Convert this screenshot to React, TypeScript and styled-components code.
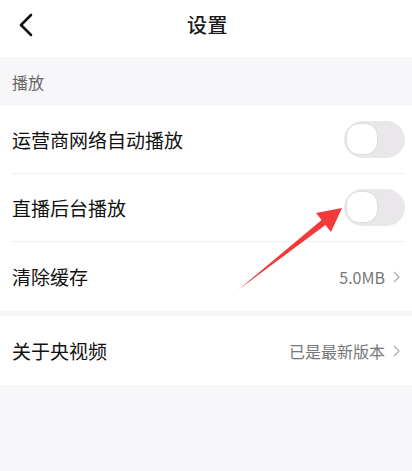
import React from 'react'
import styled, {createGlobalStyle} from 'styled-components'

const GlobalStyle = createGlobalStyle`
    html, body {
        margin: 0;
        padding: 0;
        background: #f7f6f9;
    }
    body {
        font-family: "Noto Sans CJK SC", "Noto Sans", sans-serif;
    }
`

const Page = styled.div`
    position: relative;
    width: 412px;
    height: 471px;
    background: #f7f6f9;
    overflow: hidden;
`

const Header = styled.div`
    box-sizing: border-box;
    height: 57px;
    padding-bottom: 8px;
    background: #fff;
    display: grid;
    grid-template-columns: 1fr auto 1fr;
    align-items: center;
`

const BackButton = styled.div`
    padding-left: 18px;
    display: flex;
    align-items: center;
    height: 100%;
`

const Title = styled.div`
    font-size: 20px;
    font-weight: 500;
    color: #1a1a1a;
    letter-spacing: 0.5px;
    padding-left: 3px;
`

const SectionLabel = styled.div`
    height: 49px;
    padding-left: 12px;
    display: flex;
    align-items: center;
    font-size: 16px;
    color: #666;
`

const Group = styled.div<{gapTop?: boolean}>`
    background: #fff;
    margin-top: ${props => props.gapTop ? '5px' : '0'};
    padding-left: 12px;
    padding-right: 7px;
`

const Row = styled.div<{last?: boolean}>`
    height: ${props => props.last ? '69px' : '67px'};
    display: flex;
    align-items: center;
    justify-content: space-between;
    border-bottom: ${props => props.last ? 'none' : '1px solid #efeef1'};
`

const Label = styled.div`
    font-size: 19px;
    color: #111;
`

const Value = styled.div`
    display: flex;
    align-items: center;
    gap: 8px;
    font-size: 16px;
    color: #777;
    padding-right: 5px;
`

const Switch = styled.div`
    width: 61px;
    height: 37px;
    border-radius: 19px;
    background: #e9e7ea;
    position: relative;
`

const Knob = styled.div`
    position: absolute;
    left: 2px;
    top: 2px;
    width: 30px;
    height: 30px;
    border-radius: 13px;
    background: #fff;
    border: 1.5px solid #dedcdf;
`

const Arrow = styled.svg`
    position: absolute;
    left: 0;
    top: 0;
    pointer-events: none;
`

function Chevron() {
    return (
        <svg width="7" height="12" viewBox="0 0 7 12">
            <path d="M1 1 L6 6 L1 11" fill="none" stroke="#b0aeb2" strokeWidth="1.3" />
        </svg>
    )
}

export default function App() {
    return (
        <Page>
            <GlobalStyle />
            <Header>
                <BackButton>
                    <svg width="16" height="24" viewBox="0 0 16 24">
                        <path d="M13 2 L3 12 L13 22" fill="none" stroke="#111" strokeWidth="2.6" strokeLinecap="round" strokeLinejoin="round" />
                    </svg>
                </BackButton>
                <Title>设置</Title>
                <div />
            </Header>
            <SectionLabel>播放</SectionLabel>
            <Group>
                <Row>
                    <Label>运营商网络自动播放</Label>
                    <Switch><Knob /></Switch>
                </Row>
                <Row>
                    <Label>直播后台播放</Label>
                    <Switch><Knob /></Switch>
                </Row>
                <Row last>
                    <Label>清除缓存</Label>
                    <Value>5.0MB<Chevron /></Value>
                </Row>
            </Group>
            <Group gapTop>
                <Row last>
                    <Label>关于央视频</Label>
                    <Value>已是最新版本<Chevron /></Value>
                </Row>
            </Group>
            <Arrow width="412" height="471" viewBox="0 0 412 471">
                <polygon
                    points="238,290 321.6,220.1 316,213 342,208 331,232 325.4,224.9"
                    fill="#f23a3a"
                />
            </Arrow>
        </Page>
    )
}
